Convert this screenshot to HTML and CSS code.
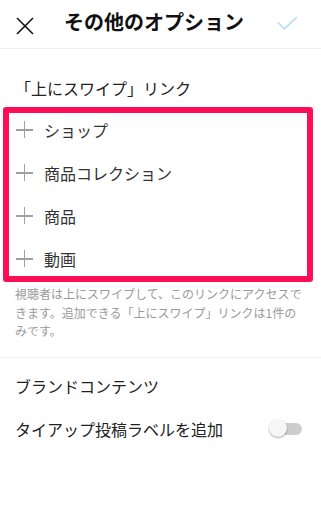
FILE: index.html
```html
<!DOCTYPE html>
<html lang="ja">
<head>
<meta charset="utf-8">
<link rel="stylesheet" href="styles.css">
</head>
<body>
<div class="page">
  <header class="header">
    <div class="close">
      <svg width="18" height="18" viewBox="0 0 18 18"><path d="M1 1 L17 17 M17 1 L1 17" stroke="#111" stroke-width="1.6" fill="none"/></svg>
    </div>
    <div class="title">その他のオプション</div>
    <div class="check">
      <svg width="22" height="15" viewBox="0 0 22 15"><path d="M1 6.5 L7.2 12.8 L20 1" stroke="#b3dcfb" stroke-width="1.6" fill="none"/></svg>
    </div>
  </header>

  <section class="links">
    <div class="section-title">「上にスワイプ」リンク</div>
    <div class="box">
      <div class="row"><span class="plus"></span><span class="label">ショップ</span></div>
      <div class="row"><span class="plus"></span><span class="label">商品コレクション</span></div>
      <div class="row"><span class="plus"></span><span class="label">商品</span></div>
      <div class="row"><span class="plus"></span><span class="label">動画</span></div>
    </div>
    <p class="desc">視聴者は上にスワイプして、このリンクにアクセスできます。追加できる「上にスワイプ」リンクは1件のみです。</p>
  </section>

  <section class="brand">
    <div class="section-title">ブランドコンテンツ</div>
    <div class="toggle-row">
      <span class="toggle-label">タイアップ投稿ラベルを追加</span>
      <span class="toggle"><span class="knob"></span></span>
    </div>
  </section>
</div>
</body>
</html>
```

FILE: styles.css
```css
html, body {
  margin: 0;
  padding: 0;
  background: #fff;
}
body {
  font-family: "Noto Sans CJK JP", "Noto Sans", sans-serif;
  color: #222;
}
.page {
  width: 321px;
}
.header {
  height: 48px;
  border-bottom: 1px solid #efefef;
  display: flex;
  align-items: center;
}
.close {
  width: 50px;
  display: flex;
  justify-content: center;
  padding-top: 3px;
}
.close svg { display: block; }
.title {
  margin-left: 14px;
  font-size: 20px;
  font-weight: 700;
  line-height: 28px;
  color: #111;
  padding-bottom: 4px;
}
.check {
  margin-left: auto;
  padding-right: 22px;
  padding-bottom: 2px;
}
.check svg { display: block; }

.links {
  padding-top: 27px;
}
.section-title {
  font-size: 16px;
  line-height: 24px;
  padding-left: 15px;
  color: #222;
}
.box {
  margin: 7px 8px 0 3px;
  border: 6px solid #ff0d57;
  border-radius: 3px;
  display: flex;
  flex-direction: column;
  gap: 9px;
}
.row {
  height: 34px;
  display: flex;
  align-items: center;
  padding-left: 7px;
  padding-bottom: 1px;
  box-sizing: border-box;
}
.plus {
  position: relative;
  width: 17px;
  height: 17px;
  flex: none;
}
.plus::before, .plus::after {
  content: "";
  position: absolute;
  background: #a0a0a0;
}
.plus::before {
  left: 0; right: 0; top: 7.8px; height: 1.8px;
}
.plus::after {
  top: 0; bottom: 0; left: 7.6px; width: 1.8px;
}
.label {
  margin-left: 11px;
  font-size: 16px;
  line-height: 24px;
  color: #333;
}
.desc {
  margin: 3px 0 0;
  padding: 0 16px 16px 15px;
  font-size: 12px;
  line-height: 18.5px;
  color: #9a9a9a;
  border-bottom: 1px solid #efefef;
}
.brand {
  padding-top: 16px;
}
.toggle-row {
  margin-top: 19px;
  display: flex;
  align-items: center;
  padding: 0 19px 0 15px;
}
.toggle-label {
  font-size: 16px;
  line-height: 24px;
  color: #222;
}
.toggle {
  margin-left: auto;
  position: relative;
  width: 29px;
  height: 12px;
  border-radius: 6px;
  background: #cdcdcd;
}
.knob {
  position: absolute;
  left: -4px;
  top: -4px;
  width: 18px;
  height: 18px;
  border-radius: 50%;
  background: #f6f6f6;
  box-shadow: 0 1px 2px rgba(0,0,0,0.35);
}
```
